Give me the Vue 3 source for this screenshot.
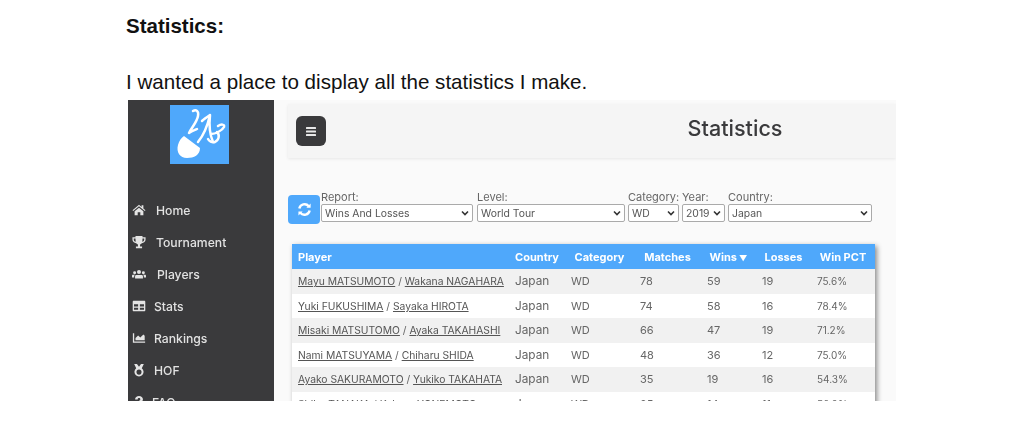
<script setup>
const navItems = [
  { label: 'Home', icon: 'home', gap: 10 },
  { label: 'Tournament', icon: 'trophy', gap: 10 },
  { label: 'Players', icon: 'users', gap: 11 },
  { label: 'Stats', icon: 'table', gap: 8 },
  { label: 'Rankings', icon: 'chart', gap: 8 },
  { label: 'HOF', icon: 'medal', gap: 8 },
  { label: 'FAQ', icon: 'question', gap: 6 },
]

const rows = [
  { a: 'Mayu MATSUMOTO', b: 'Wakana NAGAHARA', m: 78, w: 59, l: 19, pct: '75.6%' },
  { a: 'Yuki FUKUSHIMA', b: 'Sayaka HIROTA', m: 74, w: 58, l: 16, pct: '78.4%' },
  { a: 'Misaki MATSUTOMO', b: 'Ayaka TAKAHASHI', m: 66, w: 47, l: 19, pct: '71.2%' },
  { a: 'Nami MATSUYAMA', b: 'Chiharu SHIDA', m: 48, w: 36, l: 12, pct: '75.0%' },
  { a: 'Ayako SAKURAMOTO', b: 'Yukiko TAKAHATA', m: 35, w: 19, l: 16, pct: '54.3%' },
  { a: 'Shiho TANAKA', b: 'Koharu YONEMOTO', m: 25, w: 14, l: 11, pct: '56.0%' },
]
</script>

<template>
  <div class="page">
    <h2 class="doc-title">Statistics:</h2>
    <p class="doc-text">I wanted a place to display all the statistics I make.</p>

    <div class="shot">
      <aside class="sidebar">
        <div class="logo">
          <svg viewBox="0 0 59 59" width="59" height="59">
            <g fill="none" stroke="#fff" stroke-width="2.5" stroke-linecap="round" stroke-linejoin="round">
              <path d="M23 6c3-2 6 0 5 5-1 6-6 11-9 17 3-2 6-3 8-4" />
              <path d="M28 37c5-6 9-14 12-27-3 2-6 4-8 6M40 10c-1 9 0 20 3 27" />
              <path d="M41 29c4 0 11-3 13-7 1-3-3-3-6-1M47 27c3 3 2 8-2 10-3 1-6-1-7-3" />
            </g>
            <path d="M14 31 30 43C30 50 24 53 17 53 10 53 6 47 8 40 9 36 11 33 14 31z" fill="#fff" />
          </svg>
        </div>
        <nav class="nav">
          <div v-for="item in navItems" :key="item.label" class="nav-item">
            <svg class="nav-icon" viewBox="0 0 16 16" width="14" height="14" fill="#e4e4e4">
              <path v-if="item.icon === 'home'" d="M8 2 .6 8.200l.8 1L8 3.800l6.600 5.400.8-1L13 6.200V2.500h-2v2zM3 9.500V14h3.500v-3.500h3V14H13V9.500L8 5.300z" />
              <path v-else-if="item.icon === 'trophy'" d="M4 1h8v1.500h3.500V5c0 2.500-2 4-4.300 4.300-.6.800-1.300 1.300-2 1.600V13h2.300v2h-7v-2h2.300v-2.100c-.7-.3-1.400-.8-2-1.600C2.500 9 .5 7.500.5 5V2.500H4zM2 4v1c0 1.200.8 2.200 2.300 2.700C4.100 6.600 4 5.300 4 4zm10 0c0 1.300-.1 2.600-.3 3.700C13.200 7.200 14 6.200 14 5V4z" />
              <path v-else-if="item.icon === 'users'" d="M8 3.500a2.300 2.300 0 1 1 0 4.600 2.300 2.300 0 0 1 0-4.600zM3 4.800a1.700 1.700 0 1 1 0 3.400 1.700 1.700 0 0 1 0-3.400zm10 0a1.700 1.700 0 1 1 0 3.400 1.700 1.700 0 0 1 0-3.400zM5 9h6c.9 0 1.500.7 1.500 1.500V13h-9v-2.500C3.500 9.700 4.100 9 5 9zM1 8.800h2.300c-.6.400-.8 1-.8 1.700v1.500H0v-2c0-.7.400-1.200 1-1.200zm11.700 0H15c.6 0 1 .5 1 1.200v2h-2.500v-1.500c0-.7-.2-1.300-.8-1.700z" />
              <path v-else-if="item.icon === 'table'" fill-rule="evenodd" d="M2 2h12c.8 0 1.200.5 1.200 1.200v9.600c0 .7-.4 1.200-1.200 1.200H2c-.8 0-1.200-.5-1.200-1.200V3.200C.8 2.500 1.200 2 2 2zm.3 4v2.500h4.700V6zm6.700 0v2.500h4.700V6zm-6.700 4v2.300h4.700V10zm6.700 0v2.300h4.700V10z" />
              <path v-else-if="item.icon === 'chart'" d="M1 2.500h1.500V12H15v1.500H1zM4 10.500V8l3-3 2.500 2.500L13 4l1.500 1.500V10.500z" />
              <path v-else-if="item.icon === 'medal'" fill-rule="evenodd" d="M2.500 1h3.200L8 4.400 10.300 1h3.200L11.200 6a5.200 5.200 0 1 1-6.400 0zM8 7.500a2.900 2.900 0 1 0 0 5.800 2.900 2.900 0 0 0 0-5.800z" />
              <path v-else d="M3.500 5C3.500 2.500 5.500 1 8 1s4.500 1.500 4.500 3.800c0 3-3 3-3 5.200h-3c0-3.200 3-3.500 3-5.200 0-.8-.6-1.300-1.500-1.300S6.500 4 6.500 5zM6.500 11.500h3V15h-3z" />
            </svg>
            <span :style="{ marginLeft: item.gap + 'px' }">{{ item.label }}</span>
          </div>
        </nav>
      </aside>

      <main class="content">
        <header class="topbar">
          <button class="menu-btn" aria-label="Menu">
            <svg viewBox="0 0 10 9" width="10" height="9" fill="#e8e8e8">
              <rect y="0" width="10" height="2" rx=".5" />
              <rect y="3.500" width="10" height="2" rx=".5" />
              <rect y="7" width="10" height="2" rx=".5" />
            </svg>
          </button>
          <h1 class="title">Statistics</h1>
        </header>

        <div class="filters">
          <button class="refresh-btn" aria-label="Refresh">
            <svg viewBox="0 0 16 16" width="15" height="15" fill="none" stroke="#fff" stroke-width="2.600">
              <path d="M2.500 7a5.700 5.700 0 0 1 10-2.500" />
              <path d="M13.500 9a5.700 5.700 0 0 1-10 2.500" />
              <path d="M14.500 1.500v4.500H10z" fill="#fff" stroke="none" />
              <path d="M1.500 14.500V10H6z" fill="#fff" stroke="none" />
            </svg>
          </button>
          <label class="field report"><span>Report:</span>
            <select><option>Wins And Losses</option></select>
          </label>
          <label class="field level"><span>Level:</span>
            <select><option>World Tour</option></select>
          </label>
          <label class="field category"><span>Category:</span>
            <select><option>WD</option></select>
          </label>
          <label class="field year"><span>Year:</span>
            <select><option>2019</option></select>
          </label>
          <label class="field country"><span>Country:</span>
            <select><option>Japan</option></select>
          </label>
        </div>

        <table class="stats">
          <colgroup>
            <col style="width: 217px" />
            <col style="width: 56px" />
            <col style="width: 69px" />
            <col style="width: 67px" />
            <col style="width: 55px" />
            <col style="width: 55px" />
            <col style="width: 64px" />
          </colgroup>
          <thead>
            <tr>
              <th class="left">Player</th>
              <th>Country</th>
              <th>Category</th>
              <th>Matches</th>
              <th>Wins<span class="sort">▼</span></th>
              <th>Losses</th>
              <th>Win PCT</th>
            </tr>
          </thead>
          <tbody>
            <tr v-for="row in rows" :key="row.a">
              <td class="names"><a>{{ row.a }}</a> / <a>{{ row.b }}</a></td>
              <td class="country-cell">Japan</td>
              <td>WD</td>
              <td>{{ row.m }}</td>
              <td>{{ row.w }}</td>
              <td>{{ row.l }}</td>
              <td class="pct">{{ row.pct }}</td>
            </tr>
          </tbody>
        </table>
      </main>
    </div>
  </div>
</template>

<style>
html, body {
  margin: 0;
  background: #fff;
}
</style>

<style scoped>
.page {
  height: 434px;
  overflow: hidden;
  padding: 14px 0 0 126px;
  box-sizing: border-box;
  font-family: "Liberation Sans", Arial, sans-serif;
  color: #111;
}
.doc-title {
  margin: 0;
  font-size: 20.5px;
  line-height: 23px;
  font-weight: 700;
}
.doc-text {
  margin: 33px 0 0;
  font-size: 20.6px;
  line-height: 23px;
}
.shot {
  display: flex;
  width: 768px;
  height: 301px;
  margin: 7px 0 0 2px;
  overflow: hidden;
  background: #fafafa;
  font-family: Inter, "Open Sans", sans-serif;
  filter: blur(0.35px);
}
.sidebar {
  width: 146px;
  flex: none;
  background: #3a3a3c;
  color: #e2e2e2;
}
.logo {
  width: 59px;
  height: 59px;
  margin: 5px 0 0 42px;
  background: #4fa8fb;
}
.nav {
  margin-top: 30px;
}
.nav-item {
  display: flex;
  align-items: center;
  height: 32px;
  padding-left: 4px;
  font-size: 12.2px;
  font-weight: 500;
}
.nav-icon {
  flex: none;
}
.content {
  flex: 1;
  min-width: 0;
}
.topbar {
  display: flex;
  align-items: center;
  height: 54px;
  margin: 4px 0 0 14px;
  padding-left: 8px;
  background: #f5f5f5;
  box-shadow: 0 1px 3px rgba(0, 0, 0, 0.08);
}
.menu-btn {
  display: flex;
  align-items: center;
  justify-content: center;
  width: 30px;
  height: 30px;
  padding: 0;
  border: 0;
  border-radius: 6px;
  background: #3a3a3c;
}
.title {
  width: 322px;
  margin: 0 0 6px auto;
  font-size: 21.6px;
  font-weight: 500;
  text-align: center;
  color: #3a3a3c;
}
.filters {
  display: flex;
  align-items: flex-end;
  margin: 33px 0 0 14px;
  color: #666;
  font-size: 11px;
}
.refresh-btn {
  display: flex;
  align-items: center;
  justify-content: center;
  width: 32px;
  height: 29px;
  margin: 0 1px 0 0;
  padding: 0;
  border: 0;
  border-radius: 4px;
  background: #4fa8fb;
}
.field {
  display: flex;
  flex-direction: column;
  margin-right: 3px;
  line-height: 13px;
  margin-bottom: 2px;
}
.field select {
  appearance: none;
  width: 100%;
  height: 18px;
  padding: 0 12px 0 3px;
  margin: 0;
  border: 1px solid #aaa;
  border-radius: 2px;
  background: #fff url("data:image/svg+xml,%3Csvg xmlns='http://www.w3.org/2000/svg' width='8' height='6'%3E%3Cpath d='M1 1.500l3 3 3-3' fill='none' stroke='%23333' stroke-width='1.600'/%3E%3C/svg%3E") no-repeat right 3px center;
  color: #555;
  font-family: inherit;
  font-size: 10.4px;
}
.report { width: 152px; margin-right: 4px; }
.level { width: 148px; }
.category { width: 51px; white-space: nowrap; }
.year { width: 43px; }
.country { width: 144px; }
.stats {
  width: 583px;
  margin: 20px 0 0 18px;
  border-collapse: collapse;
  table-layout: fixed;
  background: #fff;
  box-shadow: 2px 2px 5px rgba(0, 0, 0, 0.45);
  font-size: 11px;
  color: #666;
}
.stats th {
  height: 25px;
  padding: 0;
  background: #4fa8fb;
  color: #fff;
  font-weight: 700;
  text-align: center;
  white-space: nowrap;
}
.stats th.left {
  padding-left: 6px;
  text-align: left;
}
.sort {
  margin-left: 2px;
  font-size: 8px;
}
.stats td {
  height: 24.5px;
  padding: 0 0 0 6px;
  white-space: nowrap;
}
.stats td.names {
  font-size: 10.3px;
}
.stats td.country-cell {
  font-size: 11.8px;
}
.stats td.pct {
  font-size: 10px;
}
.stats tbody tr:nth-child(odd) {
  background: #f1f1f1;
}
.stats a {
  color: #555;
  text-decoration: underline;
}
</style>
